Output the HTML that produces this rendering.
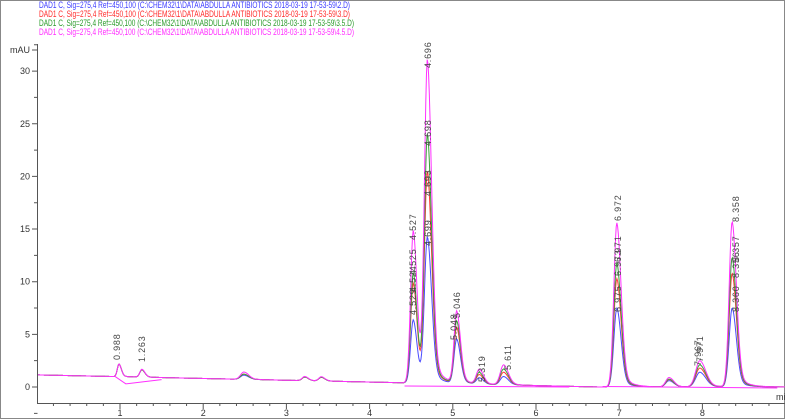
<!DOCTYPE html>
<html><head><meta charset="utf-8"><style>
html,body{margin:0;padding:0;background:#fff;width:786px;height:420px;overflow:hidden}
svg{display:block;font-family:"Liberation Sans",sans-serif}
</style></head><body>
<svg id="s" width="786" height="420" viewBox="0 0 786 420" xmlns="http://www.w3.org/2000/svg">
<rect x="0.5" y="0.5" width="784" height="418" fill="#fff" stroke="#888"/>
<g font-size="9.5">
<text x="39" y="8" fill="#3a3aff" textLength="311" lengthAdjust="spacingAndGlyphs">DAD1 C, Sig=275,4 Ref=450,100 (C:\CHEM32\1\DATA\ABDULLA ANTIBIOTICS  2018-03-19 17-53-59\2.D)</text>
<text x="39" y="17" fill="#ff2a2a" textLength="311" lengthAdjust="spacingAndGlyphs">DAD1 C, Sig=275,4 Ref=450,100 (C:\CHEM32\1\DATA\ABDULLA ANTIBIOTICS  2018-03-19 17-53-59\3.D)</text>
<text x="39" y="26" fill="#2a9a2a" textLength="315" lengthAdjust="spacingAndGlyphs">DAD1 C, Sig=275,4 Ref=450,100 (C:\CHEM32\1\DATA\ABDULLA ANTIBIOTICS  2018-03-19 17-53-59\3.5.D)</text>
<text x="39" y="35" fill="#ff2aff" textLength="315" lengthAdjust="spacingAndGlyphs">DAD1 C, Sig=275,4 Ref=450,100 (C:\CHEM32\1\DATA\ABDULLA ANTIBIOTICS  2018-03-19 17-53-59\4.5.D)</text>
</g>
<g id="ax" stroke="#555" fill="none" stroke-width="1"></g>
<g id="tx" font-size="9" fill="#333"></g>
<g id="pl" fill="none" stroke-width="1"></g>
<g id="lb" font-size="9" fill="#444" letter-spacing="0.8"></g>
</svg>
<script>
var X=function(t){return 36.8+83.2*t},Y=function(v){return 387-10.53*v};
var ns="http://www.w3.org/2000/svg";
function el(p,n,a,t){var e=document.createElementNS(ns,n);for(var k in a)e.setAttribute(k,a[k]);if(t)e.textContent=t;document.getElementById(p).appendChild(e);return e}
el('ax','path',{d:'M37.5 44V403.5H785'});
var d='';
for(var k=-1;k<=13;k++){var v=k*2.5;var y=Y(v);var big=(k%2===0);d+='M'+(big?32:34)+' '+y+'H37.5';
 if(big&&v>=0){el('tx','text',{x:30,y:y+3,'text-anchor':'end'},String(v))}}
d+='M32 50H37.5';el('tx','text',{x:30,y:53,'text-anchor':'end'},'mAU');
for(var i=1;i<=44;i++){var t=i*0.2;var x=X(t),big=(i%5===0);d+='M'+x+' 403.5V'+(big?409:406);
 if(big)el('tx','text',{x:x,y:416,'text-anchor':'middle'},String(i/5))}
el('tx','text',{x:776,y:400},'min');
el('ax','path',{d:d});
var cols=['#4a4aff','#ff3a3a','#3aa03a','#ff30ff'];
var peaks=[[0.988,[1.2,1.2,1.2,1.2],0.02],[1.263,[0.7,0.7,0.7,0.75],0.025],[2.49,[0.4,0.5,0.5,0.7],0.04],[3.22,[0.35,0.35,0.35,0.4],0.03],[3.42,[0.35,0.35,0.35,0.4],0.03],
[4.525,[6,9.5,10.5,14.5],0.032],[4.695,[13.8,20,23.5,30.5],0.036],[5.047,[4.2,5.3,5.9,6.8],0.032],[5.319,[0.6,0.9,1.1,1.4],0.035],[5.611,[0.8,1.2,1.5,1.9],0.04],
[6.972,[7.5,10.3,11.8,15.6],0.036],[7.6,[0.6,0.7,0.75,0.9],0.04],[7.97,[1.4,1.8,2.1,2.5],0.05],[8.358,[7.5,10.8,12.3,15.7],0.036]];
function base(t){return 1.15-0.17*t}
for(var s=0;s<4;s++){var p='';for(var px=38;px<=785;px+=0.7){var t=(px-36.8)/83.2,v=Math.max(0,base(t));
 for(var i=0;i<peaks.length;i++){var pk=peaks[i],dt=t-pk[0],sg=pk[2];var g=dt<0?Math.exp(-dt*dt/(2*sg*sg)):Math.exp(-dt*dt/(2*sg*sg*2.0))*0.88+0.12*Math.exp(-dt/(sg*3));if(dt>0&&dt>sg*20)g=0;v+=pk[1][s]*g}
 p+=(p?'L':'M')+px.toFixed(1)+' '+Y(v).toFixed(1)}
 el('pl','path',{d:p,stroke:cols[s]})}
el('pl','path',{d:'M'+X(0.94)+' '+Y(1.0)+'L'+X(1.07)+' '+Y(0.3)+'L'+X(1.5)+' '+Y(0.7)+'M'+X(4.42)+' '+Y(0.1)+'L'+X(6.4)+' '+Y(0.0)+'M'+X(6.8)+' '+Y(0.05)+'L'+X(8.9)+' '+Y(-0.1),stroke:'#ff30ff'});
var L=[[120,360,'0.988'],[145,362,'1.263'],[416,315,'4.529'],[416,292,'4.524'],[416,275,'4.525'],[416,240,'4.527'],
[431,246,'4.699'],[431,196,'4.693'],[431,146,'4.698'],[431,68,'4.696'],[457,340,'5.048'],[460,318,'5.046'],[485,382,'5.319'],[511,370,'5.611'],
[621,312,'6.975'],[621,276,'6.973'],[621,262,'6.971'],[621,221,'6.972'],[701,366,'7.967'],[703,362,'7.971'],[739,312,'8.360'],[739,278,'8.356'],[739,262,'8.357'],[739,222,'8.358']];
L.forEach(function(l){el('lb','text',{transform:'translate('+l[0]+','+l[1]+') rotate(-90)'},l[2])});
</script>
</body></html>
